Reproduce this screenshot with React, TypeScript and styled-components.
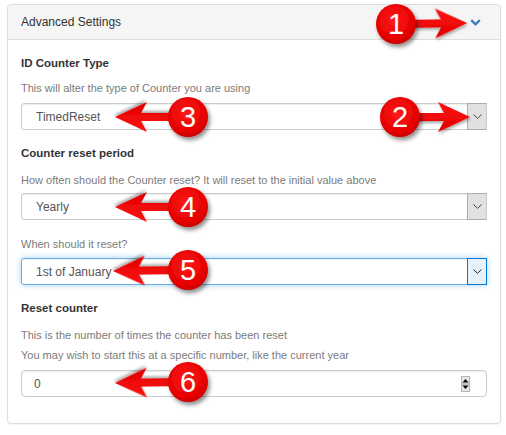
import React from 'react';
import styled, { createGlobalStyle } from 'styled-components';

const GlobalStyle = createGlobalStyle`
  html, body { margin: 0; padding: 0; background: #ffffff; }
  body { font-family: "Liberation Sans", Arial, sans-serif; }
  * { box-sizing: border-box; }
`;

const Page = styled.div`
  position: relative;
  width: 506px;
  height: 435px;
  padding: 4px 0 0 7px;
`;

const Panel = styled.section`
  width: 494px;
  border: 1px solid #dddddd;
  border-radius: 4px;
  box-shadow: 0 1px 1px rgba(0, 0, 0, 0.05);
  background: #ffffff;
  overflow: hidden;
`;

const PanelHeader = styled.div`
  height: 35px;
  display: flex;
  align-items: center;
  justify-content: space-between;
  padding: 0 19px 0 13px;
  background: #f5f5f5;
  border-bottom: 1px solid #dddddd;
  font-size: 12px;
  color: #333333;
`;

const PanelBody = styled.div`
  display: flex;
  flex-direction: column;
  padding: 15px 13px 26px 13px;
`;

const Label = styled.div<{ $mt?: number }>`
  margin-top: ${(p) => p.$mt ?? 0}px;
  font-size: 11.5px;
  line-height: 16px;
  font-weight: bold;
  color: #333333;
`;

const Help = styled.div<{ $mt?: number }>`
  margin-top: ${(p) => p.$mt ?? 0}px;
  font-size: 11px;
  line-height: 16px;
  color: #7b7b7b;
`;

const SelectBox = styled.div<{ $mt?: number; $focused?: boolean }>`
  margin-top: ${(p) => p.$mt ?? 0}px;
  height: 27px;
  display: flex;
  align-items: stretch;
  border: 1px solid ${(p) => (p.$focused ? '#66afe9' : '#cccccc')};
  border-radius: 3px;
  background: #ffffff;
  box-shadow: ${(p) =>
    p.$focused
      ? 'inset 0 1px 1px rgba(0,0,0,.075), 0 0 6px rgba(102,175,233,.6)'
      : 'inset 0 1px 1px rgba(0,0,0,.075)'};
`;

const SelectValue = styled.div`
  flex: 1;
  display: flex;
  align-items: center;
  padding-left: 14px;
  font-size: 12px;
  color: #555555;
`;

const SelectButton = styled.div<{ $focused?: boolean }>`
  width: 20px;
  display: flex;
  align-items: center;
  justify-content: center;
  background: ${(p) => (p.$focused ? '#e5f1fb' : '#e1e1e1')};
  border: 1px solid ${(p) => (p.$focused ? '#0078d7' : '#adadad')};
  border-right-color: ${(p) => (p.$focused ? '#0078d7' : '#c8c8c8')};
  margin: -1px -1px -1px 0;
`;

const NumberBox = styled.div<{ $mt?: number }>`
  margin-top: ${(p) => p.$mt ?? 0}px;
  height: 27px;
  display: flex;
  align-items: center;
  justify-content: space-between;
  padding: 0 16px 0 12px;
  border: 1px solid #cccccc;
  border-radius: 4px;
  box-shadow: inset 0 1px 1px rgba(0, 0, 0, 0.075);
  font-size: 12px;
  color: #555555;
`;

const Overlay = styled.svg`
  position: absolute;
  left: 0;
  top: 0;
  pointer-events: none;
`;

const HeaderChevron = () => (
  <svg width="11" height="7" viewBox="0 0 11 7">
    <polyline points="1.2,1.2 5.5,5.3 9.8,1.2" fill="none" stroke="#3f7fc1" strokeWidth="2.4" />
  </svg>
);

const SmallChevron = ({ dark }: { dark?: boolean }) => (
  <svg width="9" height="5" viewBox="0 0 9 5">
    <polyline points="0.5,0.5 4.5,4.3 8.5,0.5" fill="none" stroke={dark ? '#222' : '#444'} strokeWidth="1" />
  </svg>
);

const Spinner = () => (
  <svg width="9" height="16" viewBox="0 0 9 16">
    <rect x="0.5" y="0.5" width="8" height="15" fill="#e6e6e6" stroke="#b5b5b5" />
    <line x1="0.5" y1="8" x2="8.5" y2="8" stroke="#9a9a9a" />
    <polygon points="4.5,3 7.5,6.5 1.5,6.5" fill="#000" />
    <polygon points="4.5,13 7.5,9.5 1.5,9.5" fill="#000" />
  </svg>
);

const Select = ({ value, mt, focused }: { value: string; mt: number; focused?: boolean }) => (
  <SelectBox $mt={mt} $focused={focused}>
    <SelectValue>{value}</SelectValue>
    <SelectButton $focused={focused}>
      <SmallChevron dark={focused} />
    </SelectButton>
  </SelectBox>
);

type Marker = { n: string; cx: number; cy: number; tx: number; ty: number };

const markers: Marker[] = [
  { n: '1', cx: 396, cy: 24, tx: 467, ty: 23 },
  { n: '2', cx: 400, cy: 117, tx: 470, ty: 117 },
  { n: '3', cx: 188, cy: 117, tx: 115, ty: 117 },
  { n: '4', cx: 188, cy: 207, tx: 115, ty: 207 },
  { n: '5', cx: 188, cy: 270, tx: 113, ty: 271 },
  { n: '6', cx: 188, cy: 382, tx: 115, ty: 383 },
];

const Callout = ({ m }: { m: Marker }) => {
  const dx = m.tx - m.cx;
  const dy = m.ty - m.cy;
  const len = Math.sqrt(dx * dx + dy * dy);
  const ang = (Math.atan2(dy, dx) * 180) / Math.PI;
  const pts = [
    [0, 0],
    [-32, -15],
    [-26, -4],
    [-len, -4],
    [-len, 4],
    [-26, 4],
    [-32, 15],
  ]
    .map((p) => p.join(','))
    .join(' ');
  return (
    <g>
      <polygon
        points={pts}
        fill="url(#arrowGrad)"
        transform={`translate(${m.tx} ${m.ty}) rotate(${ang})`}
        filter="url(#shadowSm)"
      />
      <circle cx={m.cx} cy={m.cy} r={20} fill="url(#circleGrad)" filter="url(#shadow)" />
      <text
        x={m.cx}
        y={m.cy + 10.4}
        textAnchor="middle"
        fontFamily="Liberation Sans, Arial, sans-serif"
        fontSize="29"
        fill="#ffffff"
      >
        {m.n}
      </text>
    </g>
  );
};

export default function App() {
  return (
    <>
      <GlobalStyle />
      <Page>
        <Panel>
          <PanelHeader>
            <span>Advanced Settings</span>
            <HeaderChevron />
          </PanelHeader>
          <PanelBody>
            <Label>ID Counter Type</Label>
            <Help $mt={9}>This will alter the type of Counter you are using</Help>
            <Select value="TimedReset" mt={7} />

            <Label $mt={15}>Counter reset period</Label>
            <Help $mt={11}>How often should the Counter reset? It will reset to the initial value above</Help>
            <Select value="Yearly" mt={5} />

            <Help $mt={16}>When should it reset?</Help>
            <Select value="1st of January" mt={6} focused />

            <Label $mt={15}>Reset counter</Label>
            <Help $mt={11}>This is the number of times the counter has been reset</Help>
            <Help $mt={4}>You may wish to start this at a specific number, like the current year</Help>
            <NumberBox $mt={7}>
              <span>0</span>
              <Spinner />
            </NumberBox>
          </PanelBody>
        </Panel>
        <Overlay width="506" height="435" viewBox="0 0 506 435">
          <defs>
            <radialGradient id="circleGrad" cx="45%" cy="40%" r="60%">
              <stop offset="0%" stopColor="#ff1a1a" />
              <stop offset="80%" stopColor="#e60000" />
              <stop offset="100%" stopColor="#c80000" />
            </radialGradient>
            <linearGradient id="arrowGrad" x1="0" y1="0" x2="0" y2="1">
              <stop offset="0%" stopColor="#ff1010" />
              <stop offset="100%" stopColor="#e00000" />
            </linearGradient>
            <filter id="shadow" x="-50%" y="-50%" width="200%" height="200%">
              <feDropShadow dx="2" dy="3" stdDeviation="2" floodColor="#000" floodOpacity="0.45" />
            </filter>
            <filter id="shadowSm" x="-20%" y="-50%" width="140%" height="200%">
              <feDropShadow dx="1" dy="2" stdDeviation="1.5" floodColor="#000" floodOpacity="0.35" />
            </filter>
          </defs>
          {markers.map((m) => (
            <Callout key={m.n} m={m} />
          ))}
        </Overlay>
      </Page>
    </>
  );
}
